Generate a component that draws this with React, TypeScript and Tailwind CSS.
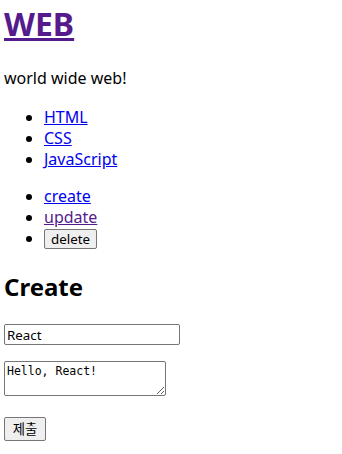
const topics = [
  { id: 1, title: "HTML" },
  { id: 2, title: "CSS" },
  { id: 3, title: "JavaScript" },
];

export default function App() {
  return (
    <div className="min-h-[454px] bg-white pl-[4px] pt-[3px] text-black font-['Noto_Sans','Noto_Sans_CJK_KR',sans-serif]">
      <h1 className="text-[32px] leading-[42px] font-bold">
        <a href="#" className="text-[#551A8B] underline">
          WEB
        </a>
      </h1>
      <p className="mt-[23px] text-[16px] leading-[21px]">world wide web!</p>
      <ul className="mt-[18px] list-disc pl-10 text-[16px] leading-[21px]">
        {topics.map((t) => (
          <li key={t.id}>
            <a href="#" className="text-[#0000EE] underline">
              {t.title}
            </a>
          </li>
        ))}
      </ul>
      <ul className="mt-[16px] list-disc pl-10 text-[16px] leading-[21px]">
        <li>
          <a href="#" className="text-[#0000EE] underline">
            create
          </a>
        </li>
        <li>
          <a href="#" className="text-[#551A8B] underline">
            update
          </a>
        </li>
        <li>
          <button className="border border-[#767676] rounded-[2px] bg-[#EFEFEF] px-[6px] py-[1px] text-[13.33px] leading-[16px]">
            delete
          </button>
        </li>
      </ul>
      <h2 className="mt-[22px] text-[24px] leading-[32px] font-bold">Create</h2>
      <form className="flex flex-col items-start mt-[21px]">
        <input
          type="text"
          name="title"
          defaultValue="React"
          className="w-[176px] h-[21px] border border-[#767676] rounded-[2px] bg-white px-[2px] py-[1px] text-[13.33px] leading-[17px]"
        />
        <textarea
          name="body"
          defaultValue="Hello, React!"
          className="mt-[16px] w-[162px] h-[35px] border border-[#767676] rounded-[2px] bg-white p-[2px] text-[11.5px] leading-[14px] font-['DejaVu_Sans_Mono',monospace]"
        />
        <button
          type="submit"
          className="mt-[21px] w-[42px] h-[24px] border border-[#767676] rounded-[2px] bg-[#EFEFEF] px-[6px] py-[1px] text-[13.33px] leading-[20px] font-['Noto_Sans_CJK_KR',sans-serif]"
        >
          제출
        </button>
      </form>
    </div>
  );
}
